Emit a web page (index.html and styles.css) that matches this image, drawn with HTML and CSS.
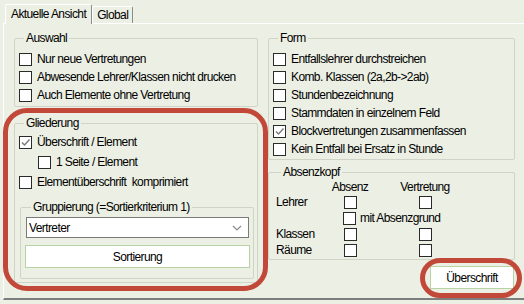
FILE: index.html
```html
<!DOCTYPE html>
<html lang="de">
<head>
    <meta charset="UTF-8">
    <title>Aktuelle Ansicht</title>
    <link rel="stylesheet" href="styles.css">
</head>
<body>
    <div class="tabs">
        <div class="tab active">Aktuelle Ansicht</div>
        <div class="tab">Global</div>
    </div>
    <div class="panel">
        <div class="col left">
            <fieldset class="group auswahl">
                <legend>Auswahl</legend>
                <div class="row"><span class="cb"></span><span>Nur neue Vertretungen</span></div>
                <div class="row"><span class="cb"></span><span>Abwesende Lehrer/Klassen nicht drucken</span></div>
                <div class="row"><span class="cb"></span><span>Auch Elemente ohne Vertretung</span></div>
            </fieldset>
            <fieldset class="group gliederung">
                <legend>Gliederung</legend>
                <div class="row tall"><span class="cb checked"><svg viewBox="0 0 11 11"><polyline points="2,5.5 4.5,8 9.5,2.5"/></svg></span><span>Überschrift / Element</span></div>
                <div class="row tall indent"><span class="cb"></span><span>1 Seite / Element</span></div>
                <div class="row tall"><span class="cb"></span><span>Elementüberschrift&nbsp; komprimiert</span></div>
                <fieldset class="group gruppierung">
                    <legend>Gruppierung (=Sortierkriterium 1)</legend>
                    <div class="select">
                        <span>Vertreter</span>
                        <svg class="chevron" viewBox="0 0 10 6"><polyline points="1,1 5,5 9,1"/></svg>
                    </div>
                    <button class="btn wide">Sortierung</button>
                </fieldset>
            </fieldset>
        </div>
        <div class="col right">
            <fieldset class="group form">
                <legend>Form</legend>
                <div class="row"><span class="cb"></span><span>Entfallslehrer durchstreichen</span></div>
                <div class="row"><span class="cb"></span><span>Komb. Klassen (2a,2b-&gt;2ab)</span></div>
                <div class="row"><span class="cb"></span><span>Stundenbezeichnung</span></div>
                <div class="row"><span class="cb"></span><span>Stammdaten in einzelnem Feld</span></div>
                <div class="row"><span class="cb checked"><svg viewBox="0 0 11 11"><polyline points="2,5.5 4.5,8 9.5,2.5"/></svg></span><span>Blockvertretungen zusammenfassen</span></div>
                <div class="row"><span class="cb"></span><span>Kein Entfall bei Ersatz in Stunde</span></div>
            </fieldset>
            <fieldset class="group absenz">
                <legend>Absenzkopf</legend>
                <div class="absenz-grid">
                    <span></span><span class="head">Absenz</span><span class="head">Vertretung</span>
                    <span class="lbl">Lehrer</span><span class="cb"></span><span class="cb"></span>
                    <span></span><span class="mit"><span class="cb"></span><span>mit Absenzgrund</span></span>
                    <span class="lbl">Klassen</span><span class="cb"></span><span class="cb"></span>
                    <span class="lbl">Räume</span><span class="cb"></span><span class="cb"></span>
                </div>
            </fieldset>
            <div class="actions">
                <button class="btn">Überschrift</button>
            </div>
        </div>
        <div class="mark mark-group"></div>
        <div class="mark mark-button"></div>
    </div>
</body>
</html>
```

FILE: styles.css
```css
body {
    margin: 0;
    background-color: #EBEFE4;
    font-family: "Liberation Sans", Arial, sans-serif;
    font-size: 12px;
    letter-spacing: -0.6px;
    color: #000;
}
.tabs {
    display: flex;
    align-items: flex-end;
    height: 23px;
    padding-left: 5px;
}
.tab {
    box-sizing: border-box;
    height: 17px;
    padding: 1px 4px 0 4px;
    line-height: 15px;
    border: 1px solid #fff;
    border-right-color: #8C8C8C;
    border-bottom: none;
    border-radius: 2px 2px 0 0;
}
.tab.active {
    position: relative;
    z-index: 1;
    height: 20px;
    margin-bottom: -1px;
    padding: 2px 5px 0 5px;
    background-color: #EBEFE4;
}
.panel {
    position: relative;
    display: flex;
    gap: 10px;
    width: 506px;
    height: 274px;
    margin-left: 3px;
    padding: 0 5px 0 10px;
    border: 1px solid #fff;
    border-right: 2px solid #7D7D7D;
    border-bottom: 2px solid #7D7D7D;
}
.col {
    display: flex;
    flex-direction: column;
}
.left {
    width: 244px;
}
.right {
    width: 247px;
}
.group {
    margin: 0;
    min-width: 0;
    border: 1px solid #D0D4C6;
    border-radius: 2px;
}
.group legend {
    margin-left: 5px;
    padding: 0 2px;
    line-height: 13px;
}
.auswahl {
    margin-top: 8px;
    padding: 5px 4px 2px 4px;
}
.gliederung {
    margin-top: 10px;
    padding: 2px 3px 3px 4px;
}
.form {
    margin-top: 8px;
    padding: 5px 4px 1px 4px;
}
.absenz {
    margin-top: 6px;
    padding: 1px 4px 1px 7px;
}
.row {
    display: flex;
    align-items: center;
    gap: 5px;
    height: 18px;
    white-space: nowrap;
}
.row.tall {
    height: 20px;
}
.row.indent {
    padding-left: 19px;
}
.cb {
    box-sizing: border-box;
    display: inline-block;
    flex: none;
    width: 13px;
    height: 13px;
    border: 1px solid #2A2A2A;
    background-color: #fff;
}
.cb svg {
    display: block;
    width: 11px;
    height: 11px;
    fill: none;
    stroke: #7A7A7A;
    stroke-width: 1.4;
}
.gruppierung {
    margin: 9px 0 0 1px;
    padding: 3px 4px 10px 5px;
}
.select {
    box-sizing: border-box;
    display: flex;
    align-items: center;
    justify-content: space-between;
    height: 21px;
    padding: 0 6px 0 2px;
    border: 1px solid #7A7A7A;
    background-color: #fff;
}
.chevron {
    width: 10px;
    height: 6px;
    fill: none;
    stroke: #8A8A8A;
    stroke-width: 1.2;
}
.btn {
    box-sizing: border-box;
    height: 23px;
    padding: 0;
    border: 1px solid #B7D3A6;
    background-color: #fff;
    font: inherit;
    letter-spacing: inherit;
    color: #000;
}
.btn.wide {
    width: calc(100% + 2px);
    margin: 7px -1px 0 -1px;
}
.absenz-grid {
    display: grid;
    grid-template-columns: 59px 30px 120px;
    grid-template-rows: 14px 16px 16px 16px 16px;
    align-items: center;
    justify-items: center;
}
.absenz-grid .lbl {
    justify-self: start;
}
.absenz-grid .mit {
    grid-column: 2 / 4;
    justify-self: start;
    display: flex;
    align-items: center;
    gap: 4px;
    margin-left: 8px;
}
.actions {
    display: flex;
    justify-content: flex-end;
    margin-top: 6px;
    padding-right: 1px;
}
.actions .btn {
    width: 84px;
}
.mark {
    position: absolute;
    box-sizing: border-box;
    border: 5px solid #C2483A;
    pointer-events: none;
}
.mark-group {
    left: -1px;
    top: 84px;
    width: 265px;
    height: 183px;
    border-radius: 24px;
}
.mark-button {
    left: 416px;
    top: 234px;
    width: 102px;
    height: 40px;
    border-radius: 20px;
}
```
